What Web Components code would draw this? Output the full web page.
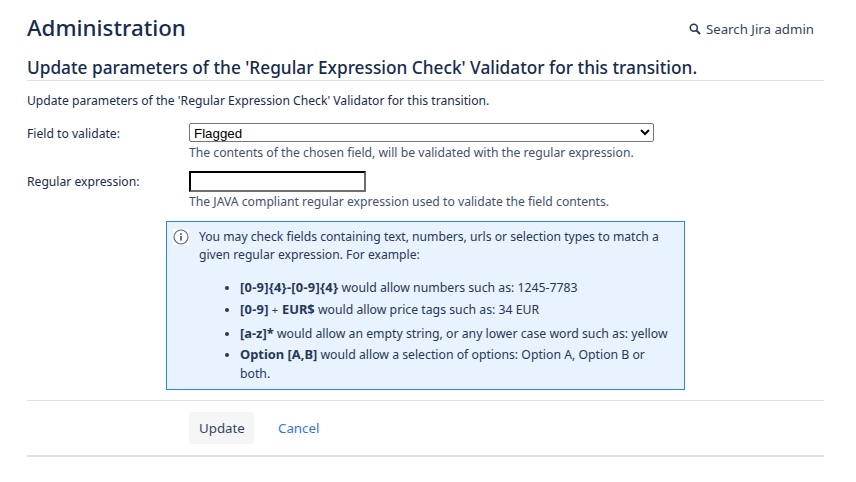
<!DOCTYPE html>
<html>
<head>
<meta charset="utf-8">
<title>Administration</title>
<style>
  html, body { margin: 0; background: #fff; }
  body { font: 12.15px/20px "Noto Sans", sans-serif; color: #172b4d; }
  li b { font-size: 12.9px; }
  li b.re { letter-spacing: .25px; }
  li .plus { margin: 0 4px 0 3px; font-size: 11px; }
</style>
</head>
<body>

<template id="admin-page-template">
  <style>
  :host { display: block; padding: 0 32px 0 27px; }
  </style>
  <slot></slot>
</template>

<template id="admin-header-template">
  <style>
  :host { display: flex; align-items: center; justify-content: space-between; height: 56px; }
  h1 { margin: 0; font-size: 22.3px; line-height: 30px; font-weight: 500; color: #172b4d; }
  .search { display: flex; align-items: center; gap: 5px; padding: 2px 10px 0 0; font-size: 13.25px; color: #344563; }
  svg { width: 12px; height: 12px; display: block; }
  </style>
  <h1><slot name="title"></slot></h1>
  <div class="search">
    <svg viewBox="0 0 12 12" fill="none" stroke="#253858"><circle cx="4.8" cy="4.8" r="3.5" stroke-width="1.5"/><path d="M7.5 7.5 11 11" stroke-width="2"/></svg>
    <slot name="search"></slot>
  </div>
</template>

<template id="form-section-template">
  <style>
  :host { display: block; }
  h2 { margin: 0; height: 24px; font-size: 17.25px; line-height: 24px; font-weight: 500; color: #172b4d; border-bottom: 1px solid #dfe1e6; }
  p { margin: 10px 0 0; color: #172b4d; }
  </style>
  <h2><slot name="title"></slot></h2>
  <p><slot name="description"></slot></p>
  <slot></slot>
</template>

<template id="field-row-template">
  <style>
  :host { display: grid; grid-template-columns: 162px 1fr; }
  label { color: #172b4d; padding-top: 1px; }
  .desc { color: #42526e; font-size: 12.2px; }
  </style>
  <label><slot name="label"></slot></label>
  <div>
    <slot></slot>
    <div class="desc"><slot name="description"></slot></div>
  </div>
</template>

<template id="info-message-template">
  <style>
  :host { display: flex; margin-left: 139px; width: 517px; border: 1px solid #2684ff; background: #e9f2ff; padding: 6px 0 6px; color: #253858; }
  .icon { flex: none; width: 16px; height: 16px; margin: 1px 10px 0 6px; }
  .body { flex: 1; padding-right: 16px; line-height: 18px; }
  </style>
  <svg class="icon" viewBox="0 0 16 16" fill="none"><rect width="16" height="16" fill="#fff"/><circle cx="8" cy="8" r="7" stroke="#5e6c84" stroke-width="1.2"/><rect x="7.2" y="7" width="1.6" height="4.6" fill="#42526e"/><rect x="7.2" y="4.2" width="1.6" height="1.7" fill="#42526e"/></svg>
  <div class="body"><slot></slot></div>
</template>

<template id="form-buttons-template">
  <style>
  :host { display: flex; align-items: center; padding: 11px 0 11px 162px; gap: 24px; border-top: 1px solid #dfe1e6; border-bottom: 2px solid #dfe1e6; }
  </style>
  <slot></slot>
</template>

<template id="aui-button-template">
  <style>
  :host { display: inline-block; width: 65px; box-sizing: border-box; height: 32px; padding: 0 10px; line-height: 32px; font-size: 13.3px; background: #f4f5f7; color: #344563; border-radius: 3px; }
  </style>
  <slot></slot>
</template>

<template id="aui-link-template">
  <style>
  :host { display: inline-block; font-size: 13.3px; color: #3572e8; }
  </style>
  <slot></slot>
</template>

<template id="field-select-template">
  <style>
  :host { display: block; width: 465px; height: 20px; }
  select { display: block; width: 100%; height: 19px; box-sizing: border-box; font: 500 13.33px "Liberation Sans", sans-serif; color: #000; background: #fff; border: 1px solid #767676; border-radius: 2px; padding: 1px 0 0; }
  </style>
  <select><option>Flagged</option></select>
</template>

<template id="field-input-template">
  <style>
  :host { display: block; width: 177px; height: 21px; }
  input { display: block; width: 100%; height: 21px; box-sizing: border-box; padding: 0 2px; background: #fff; border-width: 2px; border-style: inset; border-color: #1e1e1e #6e6e6e #6e6e6e #1e1e1e; }
  </style>
  <input type="text">
</template>

<template id="example-list-template">
  <style>
  :host { display: block; margin-top: 14px; font-size: 12.25px; line-height: 19px; }
  ul { margin: 0; padding: 0 0 0 41px; }
  </style>
  <ul><slot></slot></ul>
</template>

<admin-page>
  <admin-header>
    <span slot="title">Administration</span>
    <span slot="search">Search Jira admin</span>
  </admin-header>

  <form-section>
    <span slot="title">Update parameters of the 'Regular Expression Check' Validator for this transition.</span>
    <span slot="description">Update parameters of the 'Regular Expression Check' Validator for this transition.</span>

    <field-row style="margin-top:12px">
      <span slot="label">Field to validate:</span>
      <field-select></field-select>
      <span slot="description">The contents of the chosen field, will be validated with the regular expression.</span>
    </field-row>

    <field-row style="margin-top:8px">
      <span slot="label">Regular expression:</span>
      <field-input></field-input>
      <span slot="description">The JAVA compliant regular expression used to validate the field contents.</span>
    </field-row>

    <info-message style="margin-top:9px">
      You may check fields containing text, numbers, urls or selection types to match a given regular expression. For example:
      <example-list>
        <li style="margin-bottom:3px"><b class="re">[0-9]{4}-[0-9]{4}</b> would allow numbers such as: 1245-7783</li>
        <li style="margin-bottom:5px"><b class="re">[0-9]</b><span class="plus">+</span><b>EUR$</b> would allow price tags such as: 34 EUR</li>
        <li style="margin-bottom:2px"><b>[a-z]*</b> would allow an empty string, or any lower case word such as: yellow</li>
        <li><b>Option [A,B]</b> would allow a selection of options: Option A, Option B or<br>both.</li>
      </example-list>
    </info-message>

    <form-buttons style="margin-top:10px">
      <aui-button>Update</aui-button>
      <aui-link>Cancel</aui-link>
    </form-buttons>
  </form-section>
</admin-page>

<script>
  {
    'use strict';
    // every element here is just a template cloned into an open shadow root
    const names = ['admin-page', 'admin-header', 'form-section', 'field-row', 'info-message',
      'form-buttons', 'aui-button', 'aui-link', 'field-select', 'field-input', 'example-list'];
    for (let name of names) {
      customElements.define(name, class extends HTMLElement {
        constructor() {
          super();
          const tpl = document.getElementById(name + '-template');
          this.attachShadow({mode: 'open'}).appendChild(tpl.content.cloneNode(true));
        }
      });
    }
  }
</script>
</body>
</html>
